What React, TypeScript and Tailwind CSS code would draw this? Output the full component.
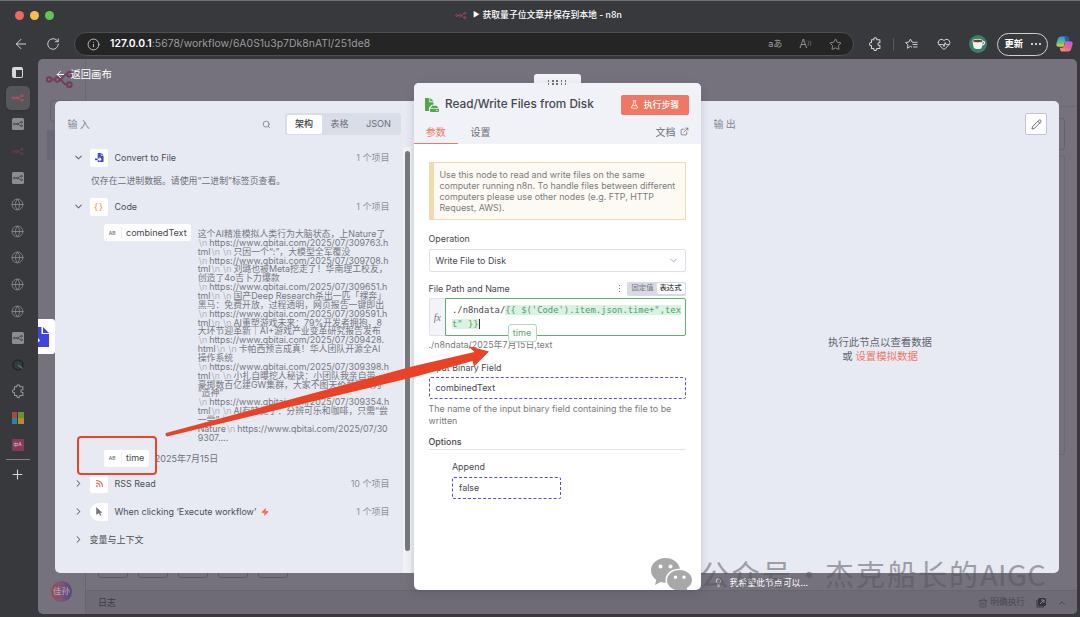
import type { ReactNode } from 'react';
import {
  ArrowLeft, ChevronDown, ChevronRight, ChevronUp, ExternalLink, FlaskConical, Globe, HeartPulse, Info,
  Lightbulb, Pencil, Plus, RotateCw, Rss, Search, Star, Trash2, Zap,
} from 'lucide-react';

const valueLines = [
  '这个AI精准模拟人类行为大脑状态，上Nature了',
  '|https://www.qbitai.com/2025/07/309763.h',
  'tml||只因一个“:”，大模型全军覆没',
  '|https://www.qbitai.com/2025/07/309708.h',
  'tml||刘璐也被Meta挖走了！华南理工校友，',
  '创造了4o吉卜力爆款',
  '|https://www.qbitai.com/2025/07/309651.h',
  'tml||国产Deep Research杀出一匹「裸奔」',
  '黑马：免费开放，过程透明，网页报告一键即出',
  '|https://www.qbitai.com/2025/07/309591.h',
  'tml||AI重塑游戏未来：79%开发者拥抱，8',
  '大环节迎革新｜AI+游戏产业变革研究报告发布',
  '|https://www.qbitai.com/2025/07/309428.',
  'html||卡帕西预言成真！华人团队开源全AI',
  '操作系统',
  '|https://www.qbitai.com/2025/07/309398.h',
  'tml||小扎自曝挖人秘诀：小团队我亲自带，',
  '豪掷数百亿建GW集群，大家不图天价薪酬只为',
  '“造神”',
  '|https://www.qbitai.com/2025/07/309354.h',
  'tml||AI有味觉了：分辨可乐和咖啡，只需“尝',
  '一尝”｜',
  'Nature|https://www.qbitai.com/2025/07/30',
  '9307....',
];

function N8n({ className }: { className: string }) {
  return (
    <svg viewBox="0 0 26 16" className={className} fill="none" stroke="currentColor" strokeWidth="2">
      <circle cx="3" cy="8" r="2.2" />
      <circle cx="11" cy="8" r="2.2" />
      <circle cx="22.5" cy="3" r="2.2" />
      <circle cx="22.5" cy="13" r="2.2" />
      <path d="M5.2 8h3.6M13.2 8c4 0 2-5 7.1-5M13.2 8c4 0 2 5 7.1 5" />
    </svg>
  );
}

function PuzzleIcon({ className }: { className: string }) {
  return (
    <svg viewBox="0 0 20 20" className={className} fill="none" stroke="currentColor" strokeWidth="1.5" strokeLinejoin="round">
      <path d="M5 4h3.300a2.200 2.200 0 1 1 4.200 0H17v4.200h-1a1.900 1.900 0 0 0 0 3.800h1V16.500h-4.500a2.200 2.200 0 1 1-4.200 0H5V12.300a2.200 2.200 0 1 1 0-4.200z" />
    </svg>
  );
}

function FileIn({ className }: { className: string }) {
  return (
    <svg viewBox="0 0 20 20" className={className} fill="currentColor">
      <path d="M6 0h7v6h6v14H6v-4h4v3l5-5-5-5v3H6z" />
      <path d="M14 0l5 5h-5zM0 12h6v4H0z" />
    </svg>
  );
}

function DiskFile() {
  return (
    <svg viewBox="0 0 14 14" className="h-[14px] w-[14px] shrink-0 text-[#56a44e]" fill="currentColor">
      <path d="M0 0h4.300v4.200h4.200v2.600H6.600L4 9.800V13H0z" />
      <path d="M5.200 0L8.600 3.300H5.200z" />
      <path d="M7.300 7.800h4.400l1.700 2.200H5.500zM5 10.700h9v2.400a.8.8 0 0 1-.8.8H5.800a.8.8 0 0 1-.8-.8z" />
      <path d="M10.800 12.300h1.800" stroke="white" strokeWidth=".8" />
    </svg>
  );
}

function SideItem({ children }: { children: ReactNode }) {
  return <div className="flex h-[26.7px] w-full shrink-0 items-center justify-center">{children}</div>;
}

function WorkflowTab() {
  return (
    <SideItem>
      <div className="flex h-3 w-3 items-center justify-center rounded-[1.5px] bg-[#8c8d90]">
        <N8n className="h-[6px] w-[10px] text-[#393a3d]" />
      </div>
    </SideItem>
  );
}

function GlobeTab() {
  return <SideItem><Globe size={13} strokeWidth={1.7} className="text-[#85868a]" /></SideItem>;
}

function NodeRow({ open, icon, round, name, count, trigger }: {
  open?: boolean; icon: ReactNode; round?: boolean; name: string; count: string; trigger?: boolean;
}) {
  const Chevron = open ? ChevronDown : ChevronRight;
  return (
    <div className="flex h-full items-center pr-6 pl-[18px]">
      <Chevron size={11} strokeWidth={2.2} className="text-[#666870]" />
      <div className={round
        ? 'ml-[6px] flex h-[18px] w-[18px] items-center justify-center rounded-l-full rounded-r-[2px] bg-white'
        : 'ml-[6px] flex h-[18px] w-[18px] items-center justify-center rounded-[2px] bg-white'}>
        {icon}
      </div>
      <span className="ml-[6.5px] text-[8.95px] text-[#4d4e54]">{name}</span>
      {trigger && <Zap size={8} className="ml-[5px] fill-[#f4694f] text-[#f4694f]" />}
      <span className="ml-auto text-[9px] text-[#8f919a]">{count}</span>
    </div>
  );
}

function KeyChip({ name }: { name: string }) {
  return (
    <div className="flex h-[17px] shrink-0 items-center rounded-[2px] bg-white">
      <span className="w-[17.5px] border-r border-[#eceef2] text-center text-[5px] leading-[12px] font-medium text-[#6d6f76]">AB</span>
      <span className="px-[4.5px] text-[9.05px] text-[#46474d]">{name}</span>
    </div>
  );
}

function ValueLine({ text }: { text: string }) {
  return (
    <div className="h-[8.87px] text-[8.88px] leading-[8.87px] whitespace-nowrap">
      {text.split('|').map((part, i) => (
        <span key={i}>
          {i > 0 && <span className="mr-[2px] ml-[1px] text-[#b0b2bb]">\n</span>}
          {part}
        </span>
      ))}
    </div>
  );
}

function BrowserBar() {
  return (
    <>
      <div className="relative flex h-[29px] shrink-0 items-center border-t border-[#6f7275] pl-[15.4px]">
        <div className="flex gap-[5.8px]">
          <span className="h-[9px] w-[9px] rounded-full bg-[#ec695e]" />
          <span className="h-[9px] w-[9px] rounded-full bg-[#f4bf4f]" />
          <span className="h-[9px] w-[9px] rounded-full bg-[#61c454]" />
        </div>
        <div className="ml-[401px] flex items-center text-[8.8px] font-medium text-white">
          <N8n className="h-[7px] w-[12px] text-[#b34562]" />
          <span className="ml-[6px] text-[7px]">▶</span>
          <span className="ml-[3px]">获取量子位文章并保存到本地 - n8n</span>
        </div>
      </div>
      <div className="flex h-[30px] shrink-0 items-center pl-[12.5px] text-[#d2d3d5]">
        <ArrowLeft size={16} strokeWidth={1.5} />
        <RotateCw size={14} strokeWidth={1.6} className="ml-[17px]" />
        <div className="ml-[14px] flex h-6 w-[780px] items-center rounded-full border border-[#4d4e50] bg-[#252526] pr-[11px] pl-[12px]">
          <Info size={13} strokeWidth={1.6} />
          <span className="ml-[10.5px] text-[10.4px] tracking-[0.03px] text-[#9b9c9e]"><b className="font-semibold text-white">127.0.0.1</b>:5678/workflow/6A0S1u3p7Dk8nATl/251de8</span>
          <span className="ml-auto text-[9px] text-[#a0a1a3]">aあ</span>
          <span className="ml-[17px] text-[12px] font-light text-[#a0a1a3]">A<sup className="text-[6px]">))</sup></span>
          <Star size={13} strokeWidth={1.5} className="ml-[17px] text-[#a0a1a3]" />
        </div>
        <PuzzleIcon className="ml-[14px] h-[14px] w-[14px]" />
        <span className="ml-[11px] h-[13px] w-px bg-[#58595c]" />
        <svg viewBox="0 0 24 24" className="ml-[11px] h-[13px] w-[13px]" fill="none" stroke="currentColor" strokeWidth="1.8">
          <path d="M13 17l-3-1.5L4.500 19l1-6.500L1 8.500l6-1L10 2l3 5.500 4 .7M14 12h9M15 16.500h8M17 8h6" />
        </svg>
        <HeartPulse size={14} strokeWidth={1.7} className="ml-[19px]" />
        <svg viewBox="0 0 18 18" className="ml-[18px] h-[18px] w-[18px]">
          <circle cx="9" cy="9" r="9" fill="#36806f" />
          <path d="M13 6.500c4-1 3 4-1 3.500" fill="none" stroke="#f5f1e8" strokeWidth="1.2" />
          <path d="M3.500 6h10.500l-1.200 6.500Q12 14 10 14H7.500Q5 14 4.500 12z" fill="#f5f1e8" />
          <ellipse cx="8.700" cy="6" rx="5.200" ry="1.700" fill="#6a3d25" stroke="#f5f1e8" strokeWidth=".8" />
        </svg>
        <div className="ml-[10px] flex h-[23px] w-[51px] items-center rounded-full border border-[#cfd0d2] pl-[7px] text-[9.3px] font-semibold text-white">
          更新
          <span className="ml-[8px] flex gap-[2px]">
            <i className="h-[2px] w-[2px] rounded-full bg-white" />
            <i className="h-[2px] w-[2px] rounded-full bg-white" />
            <i className="h-[2px] w-[2px] rounded-full bg-white" />
          </span>
        </div>
        <svg viewBox="0 0 18 16" className="ml-[8px] h-[16px] w-[17px]">
          <defs>
            <linearGradient id="copilotA" x1="0" y1="0" x2="0" y2="1">
              <stop offset="0" stopColor="#3a8df0" />
              <stop offset=".55" stopColor="#55bd8a" />
              <stop offset="1" stopColor="#efcb3c" />
            </linearGradient>
            <linearGradient id="copilotB" x1="1" y1="0" x2="0" y2="1">
              <stop offset="0" stopColor="#a860ef" />
              <stop offset=".5" stopColor="#e9639c" />
              <stop offset="1" stopColor="#f6a25c" />
            </linearGradient>
          </defs>
          <path d="M5 0h6q2 0 2.500 2L14 4h-2q-2 0-2.500 2L8 11H3Q-.5 11 .5 7.500L2 2.500Q2.800 0 5 0z" fill="url(#copilotA)" />
          <path d="M13 16H7q-2 0-2.500-2L4 12h2q2 0 2.500-2L10 5h5q3.500 0 2.500 3.500L16 13.500Q15.200 16 13 16z" fill="url(#copilotB)" />
          <path d="M9 0h2q2 0 2.500 2L14 4h-2q-1.500 0-2.200 1z" fill="#2857c8" />
        </svg>
      </div>
    </>
  );
}

function Sidebar() {
  return (
    <div className="flex w-[38px] shrink-0 flex-col items-center pt-[1.4px] pr-[3px]">
      <div className="flex h-6 shrink-0 items-center">
        <div className="h-[11px] w-[11px] rounded-[2px] border-[1.5px] border-t-[3px] border-l-[4px] border-[#d8d8da]" />
      </div>
      <SideItem>
        <div className="flex h-6 w-6 items-center justify-center rounded-[5px] bg-[#56575b] shadow">
          <N8n className="h-[8px] w-[12px] text-[#d04b68]" />
        </div>
      </SideItem>
      <WorkflowTab />
      <SideItem><N8n className="h-[7px] w-[12px] text-[#7c3c4d]" /></SideItem>
      <WorkflowTab />
      <GlobeTab />
      <GlobeTab />
      <GlobeTab />
      <GlobeTab />
      <GlobeTab />
      <WorkflowTab />
      <SideItem>
        <svg viewBox="0 0 12 12" className="h-3 w-3" fill="none">
          <circle cx="6" cy="6" r="5" stroke="#242527" strokeWidth="1.500" />
          <path d="M6 6l4.500 3.500" stroke="#438279" strokeWidth="1.200" />
        </svg>
      </SideItem>
      <SideItem><PuzzleIcon className="h-[14px] w-[14px] text-[#97989b]" /></SideItem>
      <SideItem>
        <div className="grid h-3 w-3 grid-cols-2 gap-[0.5px]">
          <span className="bg-[#a54c36]" />
          <span className="bg-[#6b9137]" />
          <span className="bg-[#367fa8]" />
          <span className="bg-[#b58c30]" />
        </div>
      </SideItem>
      <SideItem>
        <div className="flex h-3 w-3 items-center justify-center rounded-[1px] bg-[#88385b] text-[5px] leading-none text-[#dcc3cd]">中A</div>
      </SideItem>
      <div className="mt-[0.5px] h-px w-6 shrink-0 bg-[#828386]" />
      <Plus size={15} strokeWidth={1.700} className="mt-[7px] shrink-0 text-[#d8d8da]" />
    </div>
  );
}

/* Dimmed editor behind the node details view */
function CanvasBackdrop() {
  return (
    <div className="absolute inset-0 flex flex-col justify-between">
      <div className="relative h-[120px]">
        <N8n className="absolute top-[12px] left-[8px] h-[17px] w-[27px] text-[#733e5b]" />
        <div className="absolute top-0 left-[47px] h-[42px] w-px bg-[#6b6773]" />
        <div className="absolute top-[41px] left-[12px] h-[22px] w-6 rounded-[3px] border border-[#686471]" />
        <div className="absolute top-[71px] left-[9px] h-[30px] w-5 bg-[#6a6876]" />
        <div className="absolute top-[47px] right-0 h-px w-[18px] bg-[#6c6874]" />
        <div className="absolute top-[59px] right-[12px] h-[32px] w-[20px] rounded-[3px] border border-[#64606c]" />
        <div className="absolute top-[96px] right-[12px] h-[300px] w-[20px] rounded-[3px] border border-[#6c6874]" />
        <div className="absolute top-[260px] left-0 flex h-[35px] w-[17px] items-center rounded-r-[3px] bg-white">
          <svg viewBox="0 0 11 20" className="h-5 w-[11px] text-[#3e45df]" fill="currentColor">
            <path d="M0 0h3.500v7H11v13H0v-4.500l2-2L0 11zM5 0l6 6H5z" />
          </svg>
        </div>
      </div>
      <div className="flex h-[44px]">
        <div className="flex w-[48px] items-center justify-center border-r border-[#67636f] pb-[2px]">
          <div className="flex h-[21px] w-[21px] items-center justify-center rounded-full bg-linear-to-r from-[#97504f] via-[#7d5477] to-[#4c4585] text-[8.5px] text-[#b7adbb]">佳孙</div>
        </div>
        <div className="flex flex-1 flex-col">
          <div className="flex h-[20px] items-start gap-[10px] pl-[12px]">
            {[0, 1, 2, 3, 4].map(i => <div key={i} className="h-[8px] w-[30px] rounded-b-[3px] border border-[#5d5965]" />)}
          </div>
          <div className="flex flex-1 items-center border-t border-[#69656f] bg-[#6e6a76] pr-[10px] pl-[12px] text-[9px] text-[#494650]">
            <span className="text-[#3e3b45]">日志</span>
            <Trash2 size={10} strokeWidth={1.600} className="ml-auto" />
            <span className="ml-[2px] text-[8.7px]">明确执行</span>
            <svg viewBox="0 0 10 10" className="ml-[11px] h-[10px] w-[10px]">
              <rect x="2" width="8" height="8" rx="1.500" fill="#35323b" />
              <path d="M1 2v7h7" fill="none" stroke="#35323b" />
              <path d="M4 6l4-4M5 2h3v3" fill="none" stroke="#8a8691" />
            </svg>
            <ChevronUp size={10} strokeWidth={2} className="ml-[11px] text-[#3e3b45]" />
          </div>
        </div>
      </div>
    </div>
  );
}

function InputPanel() {
  return (
    <div className="relative mt-[42px] h-[472px] w-[358.500px] shrink-0 rounded-l-[5px] bg-[#e7eaf3]">
      <div className="flex h-[46px] items-center pr-[12.500px] pl-[12.500px]">
        <span className="text-[10px] tracking-[2.2px] text-[#85878f]">输入</span>
        <Search size={9} strokeWidth={2} className="ml-auto text-[#75777e]" />
        <div className="ml-[14px] flex h-[22px] w-[116px] items-center rounded-[3px] bg-[#d9dde7] p-[1.5px] text-[9px] text-[#6c6e76]">
          <span className="flex h-full w-[35px] items-center justify-center rounded-[2px] bg-white font-medium text-[#3c3d42]">架构</span>
          <span className="w-[36px] text-center">表格</span>
          <span className="flex-1 text-center text-[9.2px]">JSON</span>
        </div>
      </div>
      <div className="h-[21px]">
        <NodeRow open icon={<FileIn className="h-[9px] w-[9px] text-[#4248dc]" />} name="Convert to File" count="1 个项目" />
      </div>
      <div className="flex h-[25px] items-center pl-[36px] text-[8.9px] text-[#6b6d75]">仅存在二进制数据。请使用“二进制”标签页查看。</div>
      <div className="h-[27px]">
        <NodeRow open icon={<span className="text-[9px] font-medium tracking-[1px] text-[#f0a04f]">{'{}'}</span>} name="Code" count="1 个项目" />
      </div>
      <div className="flex items-start pt-[4px] pl-[49px]">
        <KeyChip name="combinedText" />
        <div className="mt-[6px] ml-[6.5px] text-[#76787f]">
          {valueLines.map((line, i) => <ValueLine key={i} text={line} />)}
        </div>
      </div>
      <div className="mt-[7px] flex items-center pl-[49px]">
        <KeyChip name="time" />
        <span className="ml-[6px] pt-[2px] text-[9px] text-[#6f7178]">2025年7月15日</span>
      </div>
      <div className="mt-[3px] h-[28px]">
        <NodeRow icon={<Rss size={9} strokeWidth={3} className="text-[#ee6a55]" />} name="RSS Read" count="10 个项目" />
      </div>
      <div className="h-[28px]">
        <NodeRow
          round
          trigger
          icon={<svg viewBox="0 0 8 11" className="h-[9px] w-[7px]"><path d="M0 0l7.500 7H4.800l1.500 3-1.500.8-1.500-3.200L0 9.500z" fill="#75777d" /></svg>}
          name="When clicking ‘Execute workflow’"
          count="1 个项目"
        />
      </div>
      <div className="flex h-[28px] items-center pl-[18px] text-[9px] text-[#4d4e54]">
        <ChevronRight size={11} strokeWidth={2.200} className="mr-[5.5px] text-[#666870]" />
        变量与上下文
      </div>
      <div className="absolute top-[46px] right-[2.500px] h-[426px] w-[8px] bg-[#f1f2f5] pt-[4px] pl-[1.5px]">
        <div className="h-[400px] w-[5px] rounded-full bg-[#777a7b]" />
      </div>
    </div>
  );
}

function ParameterPanel() {
  return (
    <div className="relative z-10 mt-[15px] w-[287.500px] shrink-0">
      <div className="mx-auto grid h-[9px] w-[47px] grid-cols-5 content-start gap-x-[2.500px] gap-y-[1.500px] rounded-t-[3px] bg-[#f1f1f8] px-[14px] pt-[6px]">
        {Array.from({ length: 10 }, (_, i) => <i key={i} className="h-[1.500px] w-[1.500px] bg-[#707279]" />)}
      </div>
      <div className="h-[507px] rounded-[5px] bg-white shadow-[0_3px_10px_rgba(50,50,80,0.18)]">
        <div className="h-[61px] rounded-t-[5px] bg-[#f1f1f8]">
          <div className="flex h-[43px] items-center pr-[12.500px] pl-[11.500px]">
            <DiskFile />
            <span className="ml-[6px] text-[11.750px] font-medium text-[#46474d]">Read/Write Files from Disk</span>
            <div className="ml-auto flex h-[20px] w-[68px] items-center justify-center rounded-[2px] bg-[#ee7863] text-[8.900px] font-medium text-white">
              <FlaskConical size={9} strokeWidth={2} className="mr-[5px]" />
              执行步骤
            </div>
          </div>
          <div className="flex h-[18px] text-[10px] leading-[12px] text-[#6d6f77]">
            <span className="h-full w-[44.500px] border-b-[1.500px] border-[#ee7863] text-center text-[#ee7863]">参数</span>
            <span className="ml-[12.500px]">设置</span>
            <span className="ml-auto">文档</span>
            <ExternalLink size={9} strokeWidth={2} className="mt-[1px] mr-[12px] ml-[4.500px]" />
          </div>
        </div>
        <div className="pt-[18px] pr-[15px] pl-[15px] text-[8.900px] text-[#47484e]">
          <div className="h-[58px] border border-l-[5px] border-[#f3d9b0] bg-[#fdfaf4] pt-[5.500px] pl-[6px] text-[8.880px] leading-[11.200px] whitespace-nowrap text-[#7a7b80]">
            Use this node to read and write files on the same<br />
            computer running n8n. To handle files between different<br />
            computers please use other nodes (e.g. FTP, HTTP<br />
            Request, AWS).
          </div>
          <div className="mt-[12px] h-[17px] leading-[13px]">Operation</div>
          <div className="flex h-[23px] items-center rounded-[2px] border border-[#dfe0ea] px-[6px]">
            Write File to Disk
            <ChevronDown size={11} strokeWidth={1.700} className="ml-auto text-[#91939b]" />
          </div>
          <div className="flex h-[26px] items-center pt-[7px]">
            File Path and Name
            <span className="ml-auto flex flex-col gap-[1.500px]">
              <i className="h-[1.300px] w-[1.300px] bg-[#777]" />
              <i className="h-[1.300px] w-[1.300px] bg-[#777]" />
              <i className="h-[1.300px] w-[1.300px] bg-[#777]" />
            </span>
            <span className="ml-[7px] flex h-[14px] w-[59px] items-center rounded-[2px] bg-[#d8dae5] p-[1.500px] text-[7.300px] text-[#777983]">
              <span className="w-[28px] text-center">固定值</span>
              <span className="flex h-full flex-1 items-center justify-center rounded-[1.500px] bg-white font-medium text-[#3d3e43]">表达式</span>
            </span>
          </div>
          <div className="relative flex h-[38px]">
            <div className="flex w-[16.500px] items-center justify-center rounded-l-[2px] border border-r-0 border-[#dfe0ea] bg-[#f3f3f9] font-['Liberation_Serif',serif] text-[10px] text-[#77797f] italic">fx</div>
            <div className="flex-1 rounded-r-[2px] border border-[#5fae73] pt-[4px] pl-[6px] font-['DejaVu_Sans_Mono',monospace] text-[8.850px] leading-[14.300px] whitespace-pre text-[#47484e]">
              ./n8ndata/<span className="bg-[#daf2e1] text-[#51a06d]">{'{{ $(\'Code\').item.json.time+",tex'}</span><br />
              <span className="bg-[#daf2e1] text-[#51a06d]">{'t" }}'}</span><span className="border-l border-[#333]" />
            </div>
            <div className="absolute top-[26px] left-[79px] z-10 h-[18px] w-[29px] rounded-[3px] border border-[#a9dcb8] bg-white text-center text-[9.100px] leading-[16px] text-[#59a571]">time</div>
          </div>
          <div className="mt-[2px] h-[13px] leading-[13px] text-[#7a7b80]">./n8ndata/2025年7月15日,text</div>
          <div className="mt-[9.500px] h-[16.500px] leading-[13px]">Input Binary Field</div>
          <div className="flex h-[22px] items-center rounded-[2px] border border-dashed border-[#5a4fc4] px-[6px]">combinedText</div>
          <div className="mt-[3.500px] leading-[12px] text-[#7a7b80]">The name of the input binary field containing the file to be<br />written</div>
          <div className="mt-[8px] h-[15px] border-b border-[#e3e3ec] leading-[13px] font-medium">Options</div>
          <div className="mt-[10px] ml-[23.500px]">
            <div className="h-[17px] leading-[14px]">Append</div>
            <div className="flex h-[22px] w-[109px] items-center rounded-[2px] border border-dashed border-[#5a4fc4] px-[6px]">false</div>
          </div>
        </div>
      </div>
    </div>
  );
}

function OutputPanel() {
  return (
    <div className="mt-[42px] w-[358px] shrink-0">
      <div className="flex h-[472px] flex-col rounded-r-[5px] bg-[#e7eaf3]">
        <div className="flex h-[46px] items-center justify-between pr-[12px] pl-[12.500px]">
          <span className="text-[10px] tracking-[2.200px] text-[#85878f]">输出</span>
          <div className="flex h-[22px] w-[22px] items-center justify-center rounded-[2px] border border-[#c2c4d3] bg-white">
            <Pencil size={11} strokeWidth={1.900} className="text-[#56575e]" />
          </div>
        </div>
        <div className="pt-[189px] text-center text-[10.400px] leading-[14px] text-[#62646c]">
          <p>执行此节点以查看数据</p>
          <p>或 <span className="text-[#ee7863]">设置模拟数据</span></p>
        </div>
      </div>
      <div className="flex items-center pt-[3px] pl-[12.500px] text-[8.900px] text-white">
        <Lightbulb size={9} strokeWidth={1.800} />
        <span className="ml-[7px]">我希望此节点可以...</span>
      </div>
    </div>
  );
}

/* Hand-drawn marks and watermark laid over the whole window */
function Annotations() {
  return (
    <>
      <div className="absolute top-[436px] left-[77px] z-20 h-[39px] w-[80px] rounded-[4px] border-2 border-[#e8452b]" />
      <svg viewBox="0 0 1080 617" className="pointer-events-none absolute inset-0 z-20 h-full w-full">
        <path d="M166 433L414 366L474.500 352L468 346L489 351.500L474 366.500L472.500 361L414 377L167 436.500Q164.500 435 166 433z" fill="#e94227" />
      </svg>
      <div className="absolute top-[551px] left-[650px] z-20 flex items-center text-[#55555a]">
        <svg viewBox="0 0 42 36" className="h-9 w-[42px] opacity-60" fill="#707070">
          <path fillRule="evenodd" d="M15.500 3C7 3 1 8.600 1 15.500c0 4 2 7 5.300 9.400L5 30l5.500-3q2.300.7 5.300.8C14 20 20 13.800 30 13.800 28.600 7.300 22.600 3 15.500 3zM10.500 9.500a2 2 0 1 1 0 4 2 2 0 0 1 0-4zm10 0a2 2 0 1 1 0 4 2 2 0 0 1 0-4z" />
          <path fillRule="evenodd" d="M29.500 15C22.500 15 17 19.700 17 25.300s5.500 10.300 12.500 10.300q2.200 0 4-.6l4.500 2-1.200-4q5.200-3 5.200-7.700C42 19.700 36.500 15 29.500 15zM25.500 20.500a1.700 1.700 0 1 1 0 3.400 1.700 1.700 0 0 1 0-3.400zm8.500 0a1.700 1.700 0 1 1 0 3.400 1.700 1.700 0 0 1 0-3.400z" />
        </svg>
        <span className="mt-[1px] ml-[8px] flex font-['Noto_Sans_CJK_SC',sans-serif] text-[29px] leading-[42px] whitespace-nowrap opacity-50">
          <span className="tracking-[2px]">公众号</span>
          <span className="w-[32px] text-center">·</span>
          <span className="tracking-[2px]">杰克船长的</span>
          <span className="tracking-[0.400px]">AIGC</span>
        </span>
      </div>
    </>
  );
}

export default function App() {
  return (
    <div className="relative flex h-[617px] w-[1080px] flex-col overflow-hidden bg-[#38393c] font-['Inter','Noto_Sans_CJK_SC',sans-serif]">
      <BrowserBar />
      <div className="flex min-h-0 flex-1">
        <Sidebar />
        <div className="relative mr-[3px] mb-[3px] flex-1 overflow-hidden rounded-[5px] bg-[#75717d]">
          <CanvasBackdrop />
          <div className="absolute top-[8px] left-[17px] flex items-center text-[10.300px] text-white">
            <ArrowLeft size={11} strokeWidth={2} className="mr-[4.500px]" />
            返回画布
          </div>
          <div className="relative flex h-full items-start pl-[17px]">
            <InputPanel />
            <ParameterPanel />
            <OutputPanel />
          </div>
        </div>
      </div>
      <Annotations />
    </div>
  );
}
